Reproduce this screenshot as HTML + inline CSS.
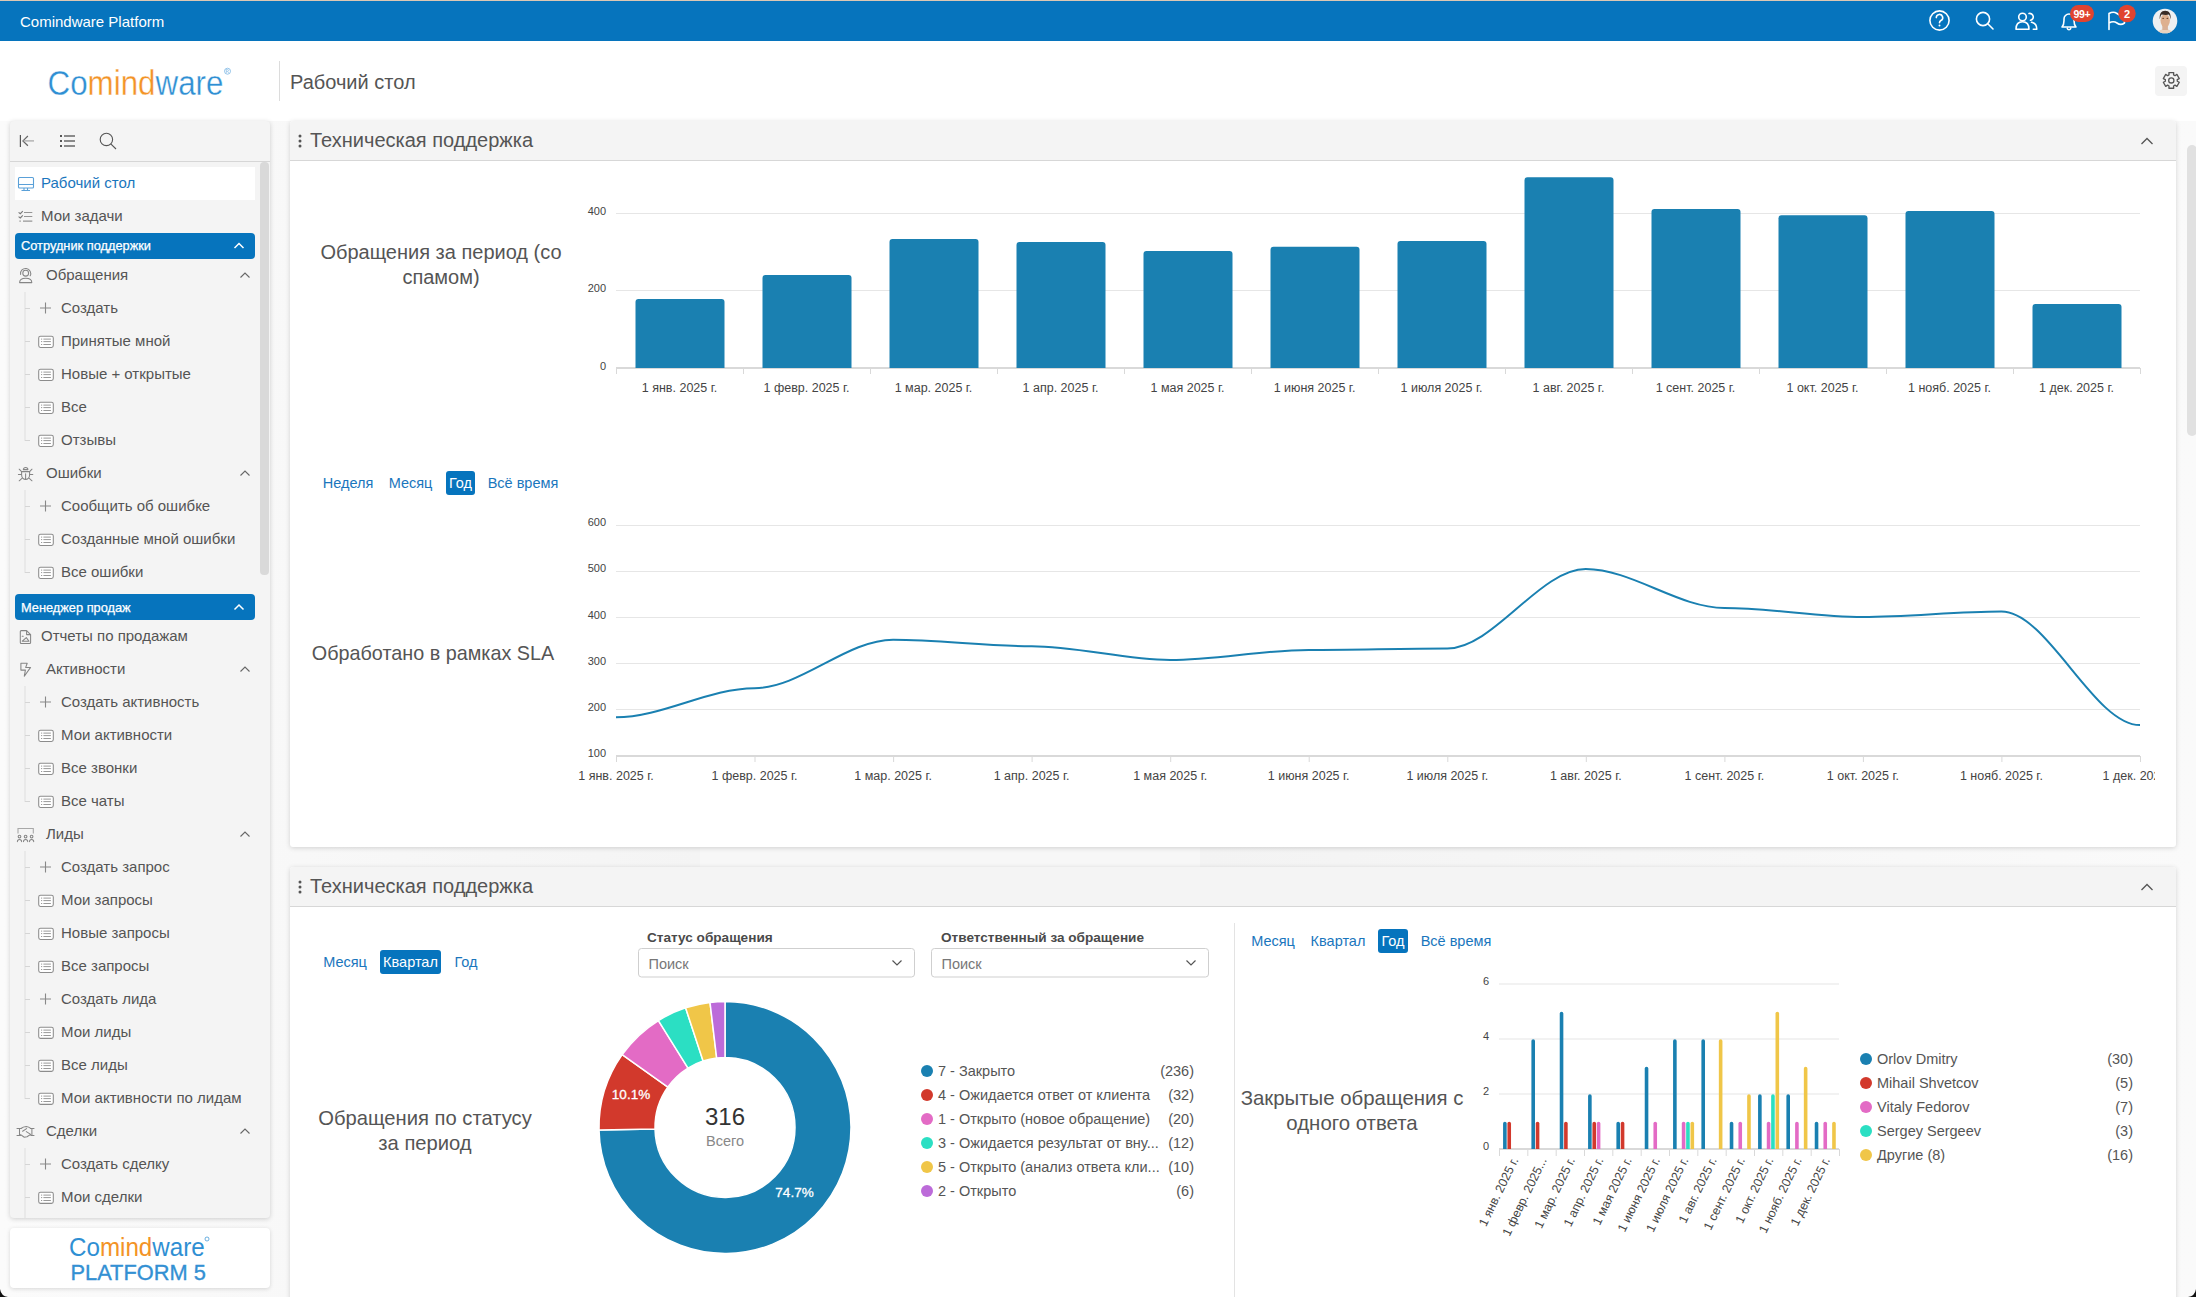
<!DOCTYPE html>
<html><head><meta charset="utf-8"><title>Comindware Platform</title>
<style>
html,body{margin:0;padding:0;}
body{width:2196px;height:1297px;overflow:hidden;position:relative;background:#f7f7f7;font-family:"Liberation Sans", sans-serif;}
.a{position:absolute;}
svg text{font-family:"Liberation Sans", sans-serif;}
</style></head><body>

<div class="a" style="left:0;top:0;width:2196px;height:121px;background:#fff"></div>
<div class="a" style="left:0;top:121px;width:700px;height:1176px;background:linear-gradient(90deg,#fbfbfb,#f4f4f4)"></div>
<div class="a" style="left:1200px;top:121px;width:996px;height:1176px;background:linear-gradient(90deg,#f3f3f3,#fafafa)"></div>
<div class="a" style="left:0;top:0;width:2196px;height:1px;background:#dcc7b4"></div>
<div class="a" style="left:0;top:1px;width:2196px;height:40px;background:#0674bd"></div>
<div class="a" style="left:10px;top:121px;width:260px;height:1097px;background:#f4f4f4;border-radius:4px;box-shadow:0 1px 5px rgba(0,0,0,0.18)"></div>
<div class="a" style="left:10px;top:161px;width:260px;height:1px;background:#d6d6d6"></div>
<div class="a" style="left:15px;top:167px;width:240px;height:33px;background:#fff"></div>
<div class="a" style="left:260px;top:162px;width:9px;height:413px;background:#d9d9d9;border-radius:4px"></div>
<div class="a" style="left:15px;top:233px;width:240px;height:26px;background:#0674bd;border-radius:4px"></div>
<div class="a" style="left:15px;top:594px;width:240px;height:26px;background:#0674bd;border-radius:4px"></div>
<div class="a" style="left:10px;top:1228px;width:260px;height:60px;background:#fff;border-radius:4px;box-shadow:0 1px 4px rgba(0,0,0,0.15)"></div>
<div class="a" style="left:290px;top:121px;width:1886px;height:726px;background:#fff;border-radius:3px;box-shadow:0 1px 5px rgba(0,0,0,0.16)"></div>
<div class="a" style="left:290px;top:121px;width:1886px;height:39px;background:#f4f4f4;border-bottom:1px solid #d7d7d7;border-radius:3px 3px 0 0"></div>
<div class="a" style="left:290px;top:867px;width:1886px;height:500px;background:#fff;border-radius:3px;box-shadow:0 1px 5px rgba(0,0,0,0.16)"></div>
<div class="a" style="left:290px;top:867px;width:1886px;height:39px;background:#f4f4f4;border-bottom:1px solid #d7d7d7;border-radius:3px 3px 0 0"></div>
<div class="a" style="left:2187px;top:145px;width:10px;height:291px;background:#e1e1e1;border-radius:5px"></div>
<div class="a" style="left:2155px;top:66px;width:32px;height:30px;background:#f4f4f4;border-radius:4px"></div>
<svg class="a" style="left:0;top:0" width="2196" height="1297">
<text x="20" y="27" font-size="15" fill="#fff" text-anchor="start" font-weight="normal" >Comindware Platform</text>
<circle cx="1939.5" cy="20.5" r="9.6" stroke="#fff" fill="none" stroke-width="1.6" stroke-linecap="round" stroke-linejoin="round"/>
<path d="M1936.3 17.6 a3.2 3.2 0 1 1 4.6 2.9 c-0.9 0.5 -1.4 1 -1.4 2.2" stroke="#fff" fill="none" stroke-width="1.6" stroke-linecap="round" stroke-linejoin="round"/><circle cx="1939.5" cy="25.6" r="1" fill="#fff"/>
<circle cx="1983" cy="19" r="6.6" stroke="#fff" fill="none" stroke-width="1.6" stroke-linecap="round" stroke-linejoin="round"/><path d="M1987.8 23.8 L1993 29" stroke="#fff" fill="none" stroke-width="1.6" stroke-linecap="round" stroke-linejoin="round"/>
<circle cx="2022.5" cy="17" r="3.8" stroke="#fff" fill="none" stroke-width="1.6" stroke-linecap="round" stroke-linejoin="round"/><path d="M2016 29.3 c0 -5 2.6 -7.5 6.5 -7.5 c3.9 0 6.5 2.5 6.5 7.5 z" stroke="#fff" fill="none" stroke-width="1.6" stroke-linecap="round" stroke-linejoin="round"/>
<path d="M2029 13.5 a3.3 3.3 0 1 1 1.5 6.8 M2031.5 22.3 c3 0.6 5.3 2.8 5.3 7 h-3.5" stroke="#fff" fill="none" stroke-width="1.6" stroke-linecap="round" stroke-linejoin="round"/>
<path d="M2062 27 h14 c-1.6 -1.8 -2 -3.5 -2 -6.5 v-1.5 a5 5 0 0 0 -10 0 v1.5 c0 3 -0.4 4.7 -2 6.5 z M2067.3 28.5 a1.8 1.8 0 0 0 3.4 0" stroke="#fff" fill="none" stroke-width="1.6" stroke-linecap="round" stroke-linejoin="round"/>
<path d="M2109 29.5 V13.5 c3 -1.8 5.5 -1.8 8 0 c2.5 1.8 5 1.8 7.5 0 v9.5 c-2.5 1.8 -5 1.8 -7.5 0 c-2.5 -1.8 -5 -1.8 -8 0" stroke="#fff" fill="none" stroke-width="1.6" stroke-linecap="round" stroke-linejoin="round"/>
<rect x="2070" y="5" width="24" height="17" rx="8.5" fill="#e0432f"/>
<text x="2082" y="17.5" font-size="10.5" fill="#fff" text-anchor="middle" font-weight="bold" letter-spacing="-0.3">99+</text>
<circle cx="2127" cy="13.5" r="8.7" fill="#e0432f"/>
<text x="2127" y="17.5" font-size="11" fill="#fff" text-anchor="middle" font-weight="bold" >2</text>
<clipPath id="av"><circle cx="2165" cy="21" r="12.3"/></clipPath>
<g clip-path="url(#av)"><rect x="2150" y="6" width="30" height="30" fill="#eef0f2"/><ellipse cx="2165" cy="35" rx="8.5" ry="6" fill="#ead2bd"/><rect x="2162.3" y="25" width="5.6" height="5" fill="#d8b197"/><ellipse cx="2165.2" cy="20.6" rx="4.7" ry="6.6" fill="#deb08f"/><path d="M2159.8 19.5 c-0.6 -5.5 1.3 -8.8 5.4 -8.8 c4.1 0 6 3.3 5.4 8.8 c-0.5 -2.5 -1 -4.5 -1.6 -5 c-1.5 0.6 -4.5 0.6 -7.4 0 c-0.8 0.6 -1.3 2.5 -1.8 5z" fill="#3a2c26"/><ellipse cx="2163.2" cy="18.3" rx="1" ry="0.6" fill="#6b4630"/><ellipse cx="2167.4" cy="18.3" rx="1" ry="0.6" fill="#6b4630"/></g>
<text x="0" y="0" transform="translate(47.5 94.5) scale(0.914 1)" font-size="34.3" stroke="#fff" stroke-width="0.35"><tspan fill="#2f8fd3">Co</tspan><tspan fill="#f39326">mind</tspan><tspan fill="#2f8fd3">ware</tspan></text>
<circle cx="227.5" cy="71.2" r="3" fill="none" stroke="#7bb6e3" stroke-width="0.8"/><path d="M226.3 73 V69.5 h1.3 a0.9 0.9 0 0 1 0 1.8 h-1.3 M227.6 71.3 l1.1 1.7" stroke="#7bb6e3" stroke-width="0.6" fill="none"/>
<rect x="279" y="61" width="1" height="40" fill="#dcdcdc"/>
<text x="290" y="89" font-size="20" fill="#555" text-anchor="start" font-weight="normal" >Рабочий стол</text>
<path d="M2168.90 72.56 L2173.70 72.56 L2173.55 74.84 L2174.99 75.67 L2176.89 74.40 L2179.29 78.56 L2177.24 79.56 L2177.24 81.24 L2179.29 82.24 L2176.89 86.40 L2174.99 85.13 L2173.55 85.96 L2173.70 88.24 L2168.90 88.24 L2169.05 85.96 L2167.61 85.13 L2165.71 86.40 L2163.31 82.24 L2165.36 81.24 L2165.36 79.56 L2163.31 78.56 L2165.71 74.40 L2167.61 75.67 L2169.05 74.84Z" stroke="#555" fill="none" stroke-width="1.3" stroke-linejoin="round"/><circle cx="2171.3" cy="80.4" r="2.6" stroke="#555" fill="none" stroke-width="1.3" stroke-linejoin="round"/>
<path d="M20.4 135 V147" stroke="#555" stroke-width="1.2" fill="none"/><path d="M27.9 136 L22.9 140.9 L27.9 145.8" stroke="#666" stroke-width="1.2" fill="none"/><path d="M23.5 140.9 H34" stroke="#aaa" stroke-width="1.3" fill="none"/>
<g fill="#555"><rect x="60" y="135" width="2" height="2"/><rect x="60" y="140" width="2" height="2"/><rect x="60" y="145" width="2" height="2"/></g>
<path d="M64 136 H75 M64 141 H75 M64 146 H75" stroke="#8a8a8a" stroke-width="1.8" fill="none"/>
<circle cx="106.4" cy="139.4" r="6.2" stroke="#555" stroke-width="1.1" fill="none"/><path d="M110.8 143.8 L116 149" stroke="#555" stroke-width="1.1" fill="none"/>
<rect x="18.5" y="177.5" width="15" height="10.5" rx="1" stroke="#5aa0d8" fill="none" stroke-width="1.1"/><path d="M18.5 184.5 H33.5 M24 188 V190 M27.5 188 V190 M21.5 190.5 H30" stroke="#5aa0d8" fill="none" stroke-width="1.1"/>
<text x="41" y="187.9" font-size="15" fill="#1a76bd" text-anchor="start" font-weight="normal" >Рабочий стол</text>
<path d="M18.6 212.4 l1.7 1.3 l2.5 -2.5 M18.6 216.6 l1.7 1.3 l2.5 -2.5" stroke="#777" fill="none" stroke-width="1.1"/><path d="M24 212.5 H32.3 M24 216.5 H32.3 M19.4 221.2 H20.8 M23 221.2 H32.3" stroke="#959595" fill="none" stroke-width="1.2"/>
<text x="41" y="220.9" font-size="15" fill="#555" text-anchor="start" font-weight="normal" >Мои задачи</text>
<text x="21" y="250.0" font-size="12.8" fill="#fff" text-anchor="start" font-weight="normal" stroke="#fff" stroke-width="0.25">Сотрудник поддержки</text>
<path d="M234.5 248.0 L239 243.5 L243.5 248.0" stroke="#fff" fill="none" stroke-width="1.5"/>
<text x="21" y="611.5" font-size="12.8" fill="#fff" text-anchor="start" font-weight="normal" stroke="#fff" stroke-width="0.25">Менеджер продаж</text>
<path d="M234.5 609.5 L239 605 L243.5 609.5" stroke="#fff" fill="none" stroke-width="1.5"/>
<circle cx="25.7" cy="273.2" r="2.9" stroke="#858585" fill="none" stroke-width="1.05" stroke-linecap="round" stroke-linejoin="round"/><path d="M20.6 274.4 a5.1 5.1 0 1 1 9.6 1.4" stroke="#858585" fill="none" stroke-width="1.05" stroke-linecap="round" stroke-linejoin="round"/><path d="M19.6 282.6 c0 -3.3 2.6 -4.3 6.1 -4.3 c3.5 0 6.1 1 6.1 4.3 z" stroke="#858585" fill="none" stroke-width="1.05" stroke-linecap="round" stroke-linejoin="round"/>
<text x="46" y="279.9" font-size="15" fill="#555" text-anchor="start" font-weight="normal" >Обращения</text>
<path d="M240.5 277.5 L245 273 L249.5 277.5" stroke="#666" fill="none" stroke-width="1.1"/>
<rect x="24.5" y="292" width="1" height="149" fill="#dedede"/>
<path d="M45.5 302.5 V313.5 M40 308 H51" stroke="#888" stroke-width="1.1" fill="none"/>
<rect x="25" y="308" width="5" height="1" fill="#d5d5d5"/>
<text x="61" y="312.9" font-size="15" fill="#555" text-anchor="start" font-weight="normal" >Создать</text>
<rect x="38.7" y="336.2" width="14.6" height="11.2" rx="1.8" stroke="#8c8c8c" stroke-width="1.05" fill="#fff"/><path d="M41 339.1 H42.2 M41 341.6 H42.2 M41 344.5 H42.2 M43.4 339.1 H50.9 M43.4 341.6 H50.9 M43.4 344.5 H50.9" stroke="#999" stroke-width="1" fill="none"/>
<rect x="25" y="341" width="5" height="1" fill="#d5d5d5"/>
<text x="61" y="345.9" font-size="15" fill="#555" text-anchor="start" font-weight="normal" >Принятые мной</text>
<rect x="38.7" y="369.2" width="14.6" height="11.2" rx="1.8" stroke="#8c8c8c" stroke-width="1.05" fill="#fff"/><path d="M41 372.1 H42.2 M41 374.6 H42.2 M41 377.5 H42.2 M43.4 372.1 H50.9 M43.4 374.6 H50.9 M43.4 377.5 H50.9" stroke="#999" stroke-width="1" fill="none"/>
<rect x="25" y="374" width="5" height="1" fill="#d5d5d5"/>
<text x="61" y="378.9" font-size="15" fill="#555" text-anchor="start" font-weight="normal" >Новые + открытые</text>
<rect x="38.7" y="402.2" width="14.6" height="11.2" rx="1.8" stroke="#8c8c8c" stroke-width="1.05" fill="#fff"/><path d="M41 405.1 H42.2 M41 407.6 H42.2 M41 410.5 H42.2 M43.4 405.1 H50.9 M43.4 407.6 H50.9 M43.4 410.5 H50.9" stroke="#999" stroke-width="1" fill="none"/>
<rect x="25" y="407" width="5" height="1" fill="#d5d5d5"/>
<text x="61" y="411.9" font-size="15" fill="#555" text-anchor="start" font-weight="normal" >Все</text>
<rect x="38.7" y="435.2" width="14.6" height="11.2" rx="1.8" stroke="#8c8c8c" stroke-width="1.05" fill="#fff"/><path d="M41 438.1 H42.2 M41 440.6 H42.2 M41 443.5 H42.2 M43.4 438.1 H50.9 M43.4 440.6 H50.9 M43.4 443.5 H50.9" stroke="#999" stroke-width="1" fill="none"/>
<rect x="25" y="440" width="5" height="1" fill="#d5d5d5"/>
<text x="61" y="444.9" font-size="15" fill="#555" text-anchor="start" font-weight="normal" >Отзывы</text>
<path d="M23.3 469.6 a2.3 2.2 0 0 1 4.6 0 z M21.6 471.6 H29.6 V474.8 a4 4.6 0 0 1 -8 0 z M25.6 473.8 V479.4" stroke="#858585" fill="none" stroke-width="1.05" stroke-linecap="round" stroke-linejoin="round"/><path d="M19.2 469.2 L21.6 471.6 M32 469.2 L29.6 471.6 M18.4 474.5 H21.5 M29.7 474.5 H32.8 M19.2 480.8 L22.2 478.2 M32 480.8 L29 478.2" stroke="#858585" fill="none" stroke-width="1.05" stroke-linecap="round" stroke-linejoin="round"/>
<text x="46" y="477.9" font-size="15" fill="#555" text-anchor="start" font-weight="normal" >Ошибки</text>
<path d="M240.5 475.5 L245 471 L249.5 475.5" stroke="#666" fill="none" stroke-width="1.1"/>
<rect x="24.5" y="490" width="1" height="83" fill="#dedede"/>
<path d="M45.5 500.5 V511.5 M40 506 H51" stroke="#888" stroke-width="1.1" fill="none"/>
<rect x="25" y="506" width="5" height="1" fill="#d5d5d5"/>
<text x="61" y="510.9" font-size="15" fill="#555" text-anchor="start" font-weight="normal" >Сообщить об ошибке</text>
<rect x="38.7" y="534.2" width="14.6" height="11.2" rx="1.8" stroke="#8c8c8c" stroke-width="1.05" fill="#fff"/><path d="M41 537.1 H42.2 M41 539.6 H42.2 M41 542.5 H42.2 M43.4 537.1 H50.9 M43.4 539.6 H50.9 M43.4 542.5 H50.9" stroke="#999" stroke-width="1" fill="none"/>
<rect x="25" y="539" width="5" height="1" fill="#d5d5d5"/>
<text x="61" y="543.9" font-size="15" fill="#555" text-anchor="start" font-weight="normal" >Созданные мной ошибки</text>
<rect x="38.7" y="567.2" width="14.6" height="11.2" rx="1.8" stroke="#8c8c8c" stroke-width="1.05" fill="#fff"/><path d="M41 570.1 H42.2 M41 572.6 H42.2 M41 575.5 H42.2 M43.4 570.1 H50.9 M43.4 572.6 H50.9 M43.4 575.5 H50.9" stroke="#999" stroke-width="1" fill="none"/>
<rect x="25" y="572" width="5" height="1" fill="#d5d5d5"/>
<text x="61" y="576.9" font-size="15" fill="#555" text-anchor="start" font-weight="normal" >Все ошибки</text>
<path d="M21.3 630.6 H26.6 L30.6 634.6 V642.4 a1 1 0 0 1 -1 1 H21.3 a1 1 0 0 1 -1 -1 V631.6 a1 1 0 0 1 1 -1 z M26.6 630.6 V634.6 H30.6 M22.2 636.3 H23.2 M22.3 641.2 L26.3 637.6 L29 641.2 Z" stroke="#858585" fill="none" stroke-width="1.05" stroke-linecap="round" stroke-linejoin="round"/>
<text x="41" y="640.9" font-size="15" fill="#555" text-anchor="start" font-weight="normal" >Отчеты по продажам</text>
<path d="M20.9 663.3 H27.2 L25.7 667.4 H30.6 L24.3 676.2 L25.4 670.1 H20.9 Z" stroke="#858585" fill="none" stroke-width="1.05" stroke-linecap="round" stroke-linejoin="round"/>
<text x="46" y="673.9" font-size="15" fill="#555" text-anchor="start" font-weight="normal" >Активности</text>
<path d="M240.5 671.5 L245 667 L249.5 671.5" stroke="#666" fill="none" stroke-width="1.1"/>
<rect x="24.5" y="686" width="1" height="116" fill="#dedede"/>
<path d="M45.5 696.5 V707.5 M40 702 H51" stroke="#888" stroke-width="1.1" fill="none"/>
<rect x="25" y="702" width="5" height="1" fill="#d5d5d5"/>
<text x="61" y="706.9" font-size="15" fill="#555" text-anchor="start" font-weight="normal" >Создать активность</text>
<rect x="38.7" y="730.2" width="14.6" height="11.2" rx="1.8" stroke="#8c8c8c" stroke-width="1.05" fill="#fff"/><path d="M41 733.1 H42.2 M41 735.6 H42.2 M41 738.5 H42.2 M43.4 733.1 H50.9 M43.4 735.6 H50.9 M43.4 738.5 H50.9" stroke="#999" stroke-width="1" fill="none"/>
<rect x="25" y="735" width="5" height="1" fill="#d5d5d5"/>
<text x="61" y="739.9" font-size="15" fill="#555" text-anchor="start" font-weight="normal" >Мои активности</text>
<rect x="38.7" y="763.2" width="14.6" height="11.2" rx="1.8" stroke="#8c8c8c" stroke-width="1.05" fill="#fff"/><path d="M41 766.1 H42.2 M41 768.6 H42.2 M41 771.5 H42.2 M43.4 766.1 H50.9 M43.4 768.6 H50.9 M43.4 771.5 H50.9" stroke="#999" stroke-width="1" fill="none"/>
<rect x="25" y="768" width="5" height="1" fill="#d5d5d5"/>
<text x="61" y="772.9" font-size="15" fill="#555" text-anchor="start" font-weight="normal" >Все звонки</text>
<rect x="38.7" y="796.2" width="14.6" height="11.2" rx="1.8" stroke="#8c8c8c" stroke-width="1.05" fill="#fff"/><path d="M41 799.1 H42.2 M41 801.6 H42.2 M41 804.5 H42.2 M43.4 799.1 H50.9 M43.4 801.6 H50.9 M43.4 804.5 H50.9" stroke="#999" stroke-width="1" fill="none"/>
<rect x="25" y="801" width="5" height="1" fill="#d5d5d5"/>
<text x="61" y="805.9" font-size="15" fill="#555" text-anchor="start" font-weight="normal" >Все чаты</text>
<path d="M18 833.4 V828.5 H33.3 V833.4" stroke="#a8a8a8" fill="none" stroke-width="1.1"/><circle cx="19.5" cy="836.6" r="1.35" stroke="#858585" fill="none" stroke-width="1.05" stroke-linecap="round" stroke-linejoin="round"/><circle cx="25.6" cy="836.6" r="1.35" stroke="#858585" fill="none" stroke-width="1.05" stroke-linecap="round" stroke-linejoin="round"/><circle cx="31.6" cy="836.6" r="1.35" stroke="#858585" fill="none" stroke-width="1.05" stroke-linecap="round" stroke-linejoin="round"/><path d="M17.4 841.6 a2.1 2.1 0 0 1 4.2 0 M23.5 841.6 a2.1 2.1 0 0 1 4.2 0 M29.5 841.6 a2.1 2.1 0 0 1 4.2 0" stroke="#858585" fill="none" stroke-width="1.05" stroke-linecap="round" stroke-linejoin="round"/>
<text x="46" y="838.9" font-size="15" fill="#555" text-anchor="start" font-weight="normal" >Лиды</text>
<path d="M240.5 836.5 L245 832 L249.5 836.5" stroke="#666" fill="none" stroke-width="1.1"/>
<rect x="24.5" y="851" width="1" height="248" fill="#dedede"/>
<path d="M45.5 861.5 V872.5 M40 867 H51" stroke="#888" stroke-width="1.1" fill="none"/>
<rect x="25" y="867" width="5" height="1" fill="#d5d5d5"/>
<text x="61" y="871.9" font-size="15" fill="#555" text-anchor="start" font-weight="normal" >Создать запрос</text>
<rect x="38.7" y="895.2" width="14.6" height="11.2" rx="1.8" stroke="#8c8c8c" stroke-width="1.05" fill="#fff"/><path d="M41 898.1 H42.2 M41 900.6 H42.2 M41 903.5 H42.2 M43.4 898.1 H50.9 M43.4 900.6 H50.9 M43.4 903.5 H50.9" stroke="#999" stroke-width="1" fill="none"/>
<rect x="25" y="900" width="5" height="1" fill="#d5d5d5"/>
<text x="61" y="904.9" font-size="15" fill="#555" text-anchor="start" font-weight="normal" >Мои запросы</text>
<rect x="38.7" y="928.2" width="14.6" height="11.2" rx="1.8" stroke="#8c8c8c" stroke-width="1.05" fill="#fff"/><path d="M41 931.1 H42.2 M41 933.6 H42.2 M41 936.5 H42.2 M43.4 931.1 H50.9 M43.4 933.6 H50.9 M43.4 936.5 H50.9" stroke="#999" stroke-width="1" fill="none"/>
<rect x="25" y="933" width="5" height="1" fill="#d5d5d5"/>
<text x="61" y="937.9" font-size="15" fill="#555" text-anchor="start" font-weight="normal" >Новые запросы</text>
<rect x="38.7" y="961.2" width="14.6" height="11.2" rx="1.8" stroke="#8c8c8c" stroke-width="1.05" fill="#fff"/><path d="M41 964.1 H42.2 M41 966.6 H42.2 M41 969.5 H42.2 M43.4 964.1 H50.9 M43.4 966.6 H50.9 M43.4 969.5 H50.9" stroke="#999" stroke-width="1" fill="none"/>
<rect x="25" y="966" width="5" height="1" fill="#d5d5d5"/>
<text x="61" y="970.9" font-size="15" fill="#555" text-anchor="start" font-weight="normal" >Все запросы</text>
<path d="M45.5 993.5 V1004.5 M40 999 H51" stroke="#888" stroke-width="1.1" fill="none"/>
<rect x="25" y="999" width="5" height="1" fill="#d5d5d5"/>
<text x="61" y="1003.9" font-size="15" fill="#555" text-anchor="start" font-weight="normal" >Создать лида</text>
<rect x="38.7" y="1027.2" width="14.6" height="11.2" rx="1.8" stroke="#8c8c8c" stroke-width="1.05" fill="#fff"/><path d="M41 1030.1 H42.2 M41 1032.6 H42.2 M41 1035.5 H42.2 M43.4 1030.1 H50.9 M43.4 1032.6 H50.9 M43.4 1035.5 H50.9" stroke="#999" stroke-width="1" fill="none"/>
<rect x="25" y="1032" width="5" height="1" fill="#d5d5d5"/>
<text x="61" y="1036.9" font-size="15" fill="#555" text-anchor="start" font-weight="normal" >Мои лиды</text>
<rect x="38.7" y="1060.2" width="14.6" height="11.2" rx="1.8" stroke="#8c8c8c" stroke-width="1.05" fill="#fff"/><path d="M41 1063.1 H42.2 M41 1065.6 H42.2 M41 1068.5 H42.2 M43.4 1063.1 H50.9 M43.4 1065.6 H50.9 M43.4 1068.5 H50.9" stroke="#999" stroke-width="1" fill="none"/>
<rect x="25" y="1065" width="5" height="1" fill="#d5d5d5"/>
<text x="61" y="1069.9" font-size="15" fill="#555" text-anchor="start" font-weight="normal" >Все лиды</text>
<rect x="38.7" y="1093.2" width="14.6" height="11.2" rx="1.8" stroke="#8c8c8c" stroke-width="1.05" fill="#fff"/><path d="M41 1096.1 H42.2 M41 1098.6 H42.2 M41 1101.5 H42.2 M43.4 1096.1 H50.9 M43.4 1098.6 H50.9 M43.4 1101.5 H50.9" stroke="#999" stroke-width="1" fill="none"/>
<rect x="25" y="1098" width="5" height="1" fill="#d5d5d5"/>
<text x="61" y="1102.9" font-size="15" fill="#555" text-anchor="start" font-weight="normal" >Мои активности по лидам</text>
<path d="M17 1128.5 H21 M30.5 1128.5 H34 M17 1135.4 H20.5 M30.8 1135.4 H34 M19.5 1128.5 V1135.4 M31.9 1128.5 V1135.4" stroke="#858585" fill="none" stroke-width="1.05" stroke-linecap="round" stroke-linejoin="round"/><path d="M21 1128.5 Q23 1126.6 26.3 1126.4 Q28.8 1126.6 30.6 1128.4 M20.6 1134.6 L24.3 1137.2 L27 1136.8 L30.7 1134.4 L26.3 1131.6 M22.6 1131.2 L26.6 1128.6" stroke="#858585" fill="none" stroke-width="1.05" stroke-linecap="round" stroke-linejoin="round"/>
<text x="46" y="1135.9" font-size="15" fill="#555" text-anchor="start" font-weight="normal" >Сделки</text>
<path d="M240.5 1133.5 L245 1129 L249.5 1133.5" stroke="#666" fill="none" stroke-width="1.1"/>
<rect x="24.5" y="1148" width="1" height="70" fill="#dedede"/>
<path d="M45.5 1158.5 V1169.5 M40 1164 H51" stroke="#888" stroke-width="1.1" fill="none"/>
<rect x="25" y="1164" width="5" height="1" fill="#d5d5d5"/>
<text x="61" y="1168.9" font-size="15" fill="#555" text-anchor="start" font-weight="normal" >Создать сделку</text>
<rect x="38.7" y="1192.2" width="14.6" height="11.2" rx="1.8" stroke="#8c8c8c" stroke-width="1.05" fill="#fff"/><path d="M41 1195.1 H42.2 M41 1197.6 H42.2 M41 1200.5 H42.2 M43.4 1195.1 H50.9 M43.4 1197.6 H50.9 M43.4 1200.5 H50.9" stroke="#999" stroke-width="1" fill="none"/>
<rect x="25" y="1197" width="5" height="1" fill="#d5d5d5"/>
<text x="61" y="1201.9" font-size="15" fill="#555" text-anchor="start" font-weight="normal" >Мои сделки</text>
<text x="0" y="0" transform="translate(69 1255.5) scale(0.93 1)" font-size="26"><tspan fill="#2f8fd3">Co</tspan><tspan fill="#f39326">mind</tspan><tspan fill="#2f8fd3">ware</tspan></text>
<circle cx="207" cy="1239" r="2" fill="none" stroke="#2f8fd3" stroke-width="0.7"/>
<text x="0" y="0" transform="translate(70.5 1279.6) scale(0.97 1)" font-size="22.5" fill="#3390d3" stroke="#3390d3" stroke-width="0.35" letter-spacing="0">PLATFORM 5</text>
<g fill="#555"><circle cx="300" cy="136" r="1.5"/><circle cx="300" cy="141" r="1.5"/><circle cx="300" cy="146" r="1.5"/></g>
<text x="310" y="147" font-size="20" fill="#555" text-anchor="start" font-weight="normal" >Техническая поддержка</text>
<path d="M2141.5 144 L2147 138.5 L2152.5 144" stroke="#555" fill="none" stroke-width="1.3"/>
<g fill="#555"><circle cx="300" cy="882" r="1.5"/><circle cx="300" cy="887" r="1.5"/><circle cx="300" cy="892" r="1.5"/></g>
<text x="310" y="893" font-size="20" fill="#555" text-anchor="start" font-weight="normal" >Техническая поддержка</text>
<path d="M2141.5 890 L2147 884.5 L2152.5 890" stroke="#555" fill="none" stroke-width="1.3"/>
<text x="441" y="259" font-size="20" fill="#555" text-anchor="middle" font-weight="normal" >Обращения за период (со</text>
<text x="441" y="284" font-size="20" fill="#555" text-anchor="middle" font-weight="normal" >спамом)</text>
<text x="606" y="369.5" font-size="11" fill="#444" text-anchor="end" font-weight="normal" >0</text>
<rect x="616" y="290" width="1524" height="1" fill="#e6e6e6"/>
<text x="606" y="292.0" font-size="11" fill="#444" text-anchor="end" font-weight="normal" >200</text>
<rect x="616" y="213" width="1524" height="1" fill="#e6e6e6"/>
<text x="606" y="214.5" font-size="11" fill="#444" text-anchor="end" font-weight="normal" >400</text>
<rect x="616" y="367" width="1524" height="2" fill="#d9d9d9"/>
<rect x="616" y="368" width="1" height="6" fill="#d9d9d9"/>
<path d="M635.5 368 V302.0 a3 3 0 0 1 3 -3 H721.5 a3 3 0 0 1 3 3 V368 z" fill="#1a80b1"/>
<text x="679.5" y="392" font-size="12.5" fill="#444" text-anchor="middle" font-weight="normal" >1 янв. 2025 г.</text>
<rect x="743" y="368" width="1" height="6" fill="#d9d9d9"/>
<path d="M762.5 368 V278.0 a3 3 0 0 1 3 -3 H848.5 a3 3 0 0 1 3 3 V368 z" fill="#1a80b1"/>
<text x="806.5" y="392" font-size="12.5" fill="#444" text-anchor="middle" font-weight="normal" >1 февр. 2025 г.</text>
<rect x="870" y="368" width="1" height="6" fill="#d9d9d9"/>
<path d="M889.5 368 V242.0 a3 3 0 0 1 3 -3 H975.5 a3 3 0 0 1 3 3 V368 z" fill="#1a80b1"/>
<text x="933.5" y="392" font-size="12.5" fill="#444" text-anchor="middle" font-weight="normal" >1 мар. 2025 г.</text>
<rect x="997" y="368" width="1" height="6" fill="#d9d9d9"/>
<path d="M1016.5 368 V245.1 a3 3 0 0 1 3 -3 H1102.5 a3 3 0 0 1 3 3 V368 z" fill="#1a80b1"/>
<text x="1060.5" y="392" font-size="12.5" fill="#444" text-anchor="middle" font-weight="normal" >1 апр. 2025 г.</text>
<rect x="1124" y="368" width="1" height="6" fill="#d9d9d9"/>
<path d="M1143.5 368 V254.0 a3 3 0 0 1 3 -3 H1229.5 a3 3 0 0 1 3 3 V368 z" fill="#1a80b1"/>
<text x="1187.5" y="392" font-size="12.5" fill="#444" text-anchor="middle" font-weight="normal" >1 мая 2025 г.</text>
<rect x="1251" y="368" width="1" height="6" fill="#d9d9d9"/>
<path d="M1270.5 368 V249.7 a3 3 0 0 1 3 -3 H1356.5 a3 3 0 0 1 3 3 V368 z" fill="#1a80b1"/>
<text x="1314.5" y="392" font-size="12.5" fill="#444" text-anchor="middle" font-weight="normal" >1 июня 2025 г.</text>
<rect x="1378" y="368" width="1" height="6" fill="#d9d9d9"/>
<path d="M1397.5 368 V243.9 a3 3 0 0 1 3 -3 H1483.5 a3 3 0 0 1 3 3 V368 z" fill="#1a80b1"/>
<text x="1441.5" y="392" font-size="12.5" fill="#444" text-anchor="middle" font-weight="normal" >1 июля 2025 г.</text>
<rect x="1505" y="368" width="1" height="6" fill="#d9d9d9"/>
<path d="M1524.5 368 V180.3 a3 3 0 0 1 3 -3 H1610.5 a3 3 0 0 1 3 3 V368 z" fill="#1a80b1"/>
<text x="1568.5" y="392" font-size="12.5" fill="#444" text-anchor="middle" font-weight="normal" >1 авг. 2025 г.</text>
<rect x="1632" y="368" width="1" height="6" fill="#d9d9d9"/>
<path d="M1651.5 368 V212.1 a3 3 0 0 1 3 -3 H1737.5 a3 3 0 0 1 3 3 V368 z" fill="#1a80b1"/>
<text x="1695.5" y="392" font-size="12.5" fill="#444" text-anchor="middle" font-weight="normal" >1 сент. 2025 г.</text>
<rect x="1759" y="368" width="1" height="6" fill="#d9d9d9"/>
<path d="M1778.5 368 V218.3 a3 3 0 0 1 3 -3 H1864.5 a3 3 0 0 1 3 3 V368 z" fill="#1a80b1"/>
<text x="1822.5" y="392" font-size="12.5" fill="#444" text-anchor="middle" font-weight="normal" >1 окт. 2025 г.</text>
<rect x="1886" y="368" width="1" height="6" fill="#d9d9d9"/>
<path d="M1905.5 368 V214.1 a3 3 0 0 1 3 -3 H1991.5 a3 3 0 0 1 3 3 V368 z" fill="#1a80b1"/>
<text x="1949.5" y="392" font-size="12.5" fill="#444" text-anchor="middle" font-weight="normal" >1 нояб. 2025 г.</text>
<rect x="2013" y="368" width="1" height="6" fill="#d9d9d9"/>
<path d="M2032.5 368 V307.1 a3 3 0 0 1 3 -3 H2118.5 a3 3 0 0 1 3 3 V368 z" fill="#1a80b1"/>
<text x="2076.5" y="392" font-size="12.5" fill="#444" text-anchor="middle" font-weight="normal" >1 дек. 2025 г.</text>
<rect x="2140" y="368" width="1" height="6" fill="#d9d9d9"/>
<text x="348.0" y="488" font-size="14.5" fill="#1a76bd" text-anchor="middle" font-weight="normal" >Неделя</text>
<text x="410.5" y="488" font-size="14.5" fill="#1a76bd" text-anchor="middle" font-weight="normal" >Месяц</text>
<rect x="446" y="471" width="29" height="24" rx="3" fill="#0674bd"/>
<text x="460.5" y="488" font-size="14.5" fill="#fff" text-anchor="middle" font-weight="normal" >Год</text>
<text x="523.0" y="488" font-size="14.5" fill="#1a76bd" text-anchor="middle" font-weight="normal" >Всё время</text>
<text x="433" y="660" font-size="19.8" fill="#555" text-anchor="middle" font-weight="normal" >Обработано в рамках SLA</text>
<text x="606" y="757.1" font-size="11" fill="#444" text-anchor="end" font-weight="normal" >100</text>
<rect x="616" y="709" width="1524" height="1" fill="#e6e6e6"/>
<text x="606" y="710.94" font-size="11" fill="#444" text-anchor="end" font-weight="normal" >200</text>
<rect x="616" y="663" width="1524" height="1" fill="#e6e6e6"/>
<text x="606" y="664.78" font-size="11" fill="#444" text-anchor="end" font-weight="normal" >300</text>
<rect x="616" y="617" width="1524" height="1" fill="#e6e6e6"/>
<text x="606" y="618.62" font-size="11" fill="#444" text-anchor="end" font-weight="normal" >400</text>
<rect x="616" y="571" width="1524" height="1" fill="#e6e6e6"/>
<text x="606" y="572.46" font-size="11" fill="#444" text-anchor="end" font-weight="normal" >500</text>
<rect x="616" y="525" width="1524" height="1" fill="#e6e6e6"/>
<text x="606" y="526.3000000000001" font-size="11" fill="#444" text-anchor="end" font-weight="normal" >600</text>
<rect x="616" y="755" width="1524" height="2" fill="#d9d9d9"/>
<clipPath id="clipL"><rect x="2000" y="760" width="155" height="30"/></clipPath>
<rect x="616.0" y="756" width="1" height="6" fill="#d9d9d9"/>
<text x="616.0" y="780" font-size="12.5" fill="#444" text-anchor="middle" font-weight="normal" >1 янв. 2025 г.</text>
<rect x="754.5" y="756" width="1" height="6" fill="#d9d9d9"/>
<text x="754.5" y="780" font-size="12.5" fill="#444" text-anchor="middle" font-weight="normal" >1 февр. 2025 г.</text>
<rect x="893.1" y="756" width="1" height="6" fill="#d9d9d9"/>
<text x="893.1" y="780" font-size="12.5" fill="#444" text-anchor="middle" font-weight="normal" >1 мар. 2025 г.</text>
<rect x="1031.6" y="756" width="1" height="6" fill="#d9d9d9"/>
<text x="1031.6" y="780" font-size="12.5" fill="#444" text-anchor="middle" font-weight="normal" >1 апр. 2025 г.</text>
<rect x="1170.2" y="756" width="1" height="6" fill="#d9d9d9"/>
<text x="1170.2" y="780" font-size="12.5" fill="#444" text-anchor="middle" font-weight="normal" >1 мая 2025 г.</text>
<rect x="1308.7" y="756" width="1" height="6" fill="#d9d9d9"/>
<text x="1308.7" y="780" font-size="12.5" fill="#444" text-anchor="middle" font-weight="normal" >1 июня 2025 г.</text>
<rect x="1447.3" y="756" width="1" height="6" fill="#d9d9d9"/>
<text x="1447.3" y="780" font-size="12.5" fill="#444" text-anchor="middle" font-weight="normal" >1 июля 2025 г.</text>
<rect x="1585.8" y="756" width="1" height="6" fill="#d9d9d9"/>
<text x="1585.8" y="780" font-size="12.5" fill="#444" text-anchor="middle" font-weight="normal" >1 авг. 2025 г.</text>
<rect x="1724.4" y="756" width="1" height="6" fill="#d9d9d9"/>
<text x="1724.4" y="780" font-size="12.5" fill="#444" text-anchor="middle" font-weight="normal" >1 сент. 2025 г.</text>
<rect x="1862.9" y="756" width="1" height="6" fill="#d9d9d9"/>
<text x="1862.9" y="780" font-size="12.5" fill="#444" text-anchor="middle" font-weight="normal" >1 окт. 2025 г.</text>
<rect x="2001.4" y="756" width="1" height="6" fill="#d9d9d9"/>
<text x="2001.4" y="780" font-size="12.5" fill="#444" text-anchor="middle" font-weight="normal" >1 нояб. 2025 г.</text>
<rect x="2140.0" y="756" width="1" height="6" fill="#d9d9d9"/>
<text x="2140.0" y="780" font-size="12.5" fill="#444" text-anchor="middle" font-weight="normal" clip-path="url(#clipL)">1 дек. 2025 г.</text>
<path d="M616.0 717.3 C662.2 717.3 708.4 688.2 754.5 688.2 C800.7 688.2 846.9 639.7 893.1 639.7 C939.3 639.7 985.5 646.2 1031.6 646.2 C1077.8 646.2 1124.0 660.0 1170.2 660.0 C1216.4 660.0 1262.5 649.9 1308.7 649.9 C1354.9 649.9 1401.1 648.5 1447.3 648.5 C1493.5 648.5 1539.6 569.1 1585.8 569.1 C1632.0 569.1 1678.2 607.9 1724.4 607.9 C1770.5 607.9 1816.7 617.1 1862.9 617.1 C1909.1 617.1 1955.3 611.6 2001.4 611.6 C2047.6 611.6 2093.8 725.1 2140.0 725.1" fill="none" stroke="#1a80b1" stroke-width="2"/>
<text x="345.0" y="967" font-size="14.5" fill="#1a76bd" text-anchor="middle" font-weight="normal" >Месяц</text>
<rect x="380" y="950" width="61" height="24" rx="3" fill="#0674bd"/>
<text x="410.5" y="967" font-size="14.5" fill="#fff" text-anchor="middle" font-weight="normal" >Квартал</text>
<text x="466.0" y="967" font-size="14.5" fill="#1a76bd" text-anchor="middle" font-weight="normal" >Год</text>
<text x="425" y="1125" font-size="20.2" fill="#555" text-anchor="middle" font-weight="normal" >Обращения по статусу</text>
<text x="425" y="1150" font-size="20.2" fill="#555" text-anchor="middle" font-weight="normal" >за период</text>
<text x="647" y="942" font-size="13.6" fill="#4a4a4a" text-anchor="start" font-weight="bold" >Статус обращения</text>
<rect x="638.5" y="948.5" width="276.0" height="28.5" rx="3" fill="#fff" stroke="#cfcfcf" stroke-width="1"/>
<text x="648.5" y="968.5" font-size="14.5" fill="#777" text-anchor="start" font-weight="normal" >Поиск</text>
<path d="M892.5 960.5 L897.0 965 L901.5 960.5" stroke="#555" fill="none" stroke-width="1.2"/>
<text x="941" y="942" font-size="13.6" fill="#4a4a4a" text-anchor="start" font-weight="bold" >Ответственный за обращение</text>
<rect x="931.5" y="948.5" width="277.0" height="28.5" rx="3" fill="#fff" stroke="#cfcfcf" stroke-width="1"/>
<text x="941.5" y="968.5" font-size="14.5" fill="#777" text-anchor="start" font-weight="normal" >Поиск</text>
<path d="M1186.5 960.5 L1191.0 965 L1195.5 960.5" stroke="#555" fill="none" stroke-width="1.2"/>
<rect x="1234" y="923" width="1" height="380" fill="#e3e3e3"/>
<path d="M725.00 1001.50 A126 126 0 1 1 599.02 1130.01 L655.01 1128.89 A70 70 0 1 0 725.00 1057.50 Z" fill="#1a80b1" stroke="#fff" stroke-width="1.5" stroke-linejoin="round"/>
<path d="M599.02 1130.01 A126 126 0 0 1 622.19 1054.66 L667.88 1087.03 A70 70 0 0 0 655.01 1128.89 Z" fill="#d2392c" stroke="#fff" stroke-width="1.5" stroke-linejoin="round"/>
<path d="M622.19 1054.66 A126 126 0 0 1 658.42 1020.53 L688.01 1068.07 A70 70 0 0 0 667.88 1087.03 Z" fill="#e36bc5" stroke="#fff" stroke-width="1.5" stroke-linejoin="round"/>
<path d="M658.42 1020.53 A126 126 0 0 1 685.59 1007.82 L703.10 1061.01 A70 70 0 0 0 688.01 1068.07 Z" fill="#2bdfc3" stroke="#fff" stroke-width="1.5" stroke-linejoin="round"/>
<path d="M685.59 1007.82 A126 126 0 0 1 710.00 1002.40 L716.67 1058.00 A70 70 0 0 0 703.10 1061.01 Z" fill="#f0c648" stroke="#fff" stroke-width="1.5" stroke-linejoin="round"/>
<path d="M710.00 1002.40 A126 126 0 0 1 725.00 1001.50 L725.00 1057.50 A70 70 0 0 0 716.67 1058.00 Z" fill="#bc6bd9" stroke="#fff" stroke-width="1.5" stroke-linejoin="round"/>
<text x="725" y="1125" font-size="24" fill="#333" text-anchor="middle" font-weight="normal" >316</text>
<text x="725" y="1146" font-size="14.5" fill="#888" text-anchor="middle" font-weight="normal" >Всего</text>
<text x="631" y="1099" font-size="13.5" fill="#fff" text-anchor="middle" font-weight="normal" stroke="#fff" stroke-width="0.3">10.1%</text>
<text x="794.5" y="1197" font-size="13.5" fill="#fff" text-anchor="middle" font-weight="normal" stroke="#fff" stroke-width="0.3">74.7%</text>
<circle cx="927" cy="1071" r="6" fill="#1a80b1"/>
<text x="938" y="1076" font-size="14.5" fill="#555" text-anchor="start" font-weight="normal" >7 - Закрыто</text>
<text x="1194" y="1076" font-size="14.5" fill="#555" text-anchor="end" font-weight="normal" >(236)</text>
<circle cx="927" cy="1095" r="6" fill="#d2392c"/>
<text x="938" y="1100" font-size="14.5" fill="#555" text-anchor="start" font-weight="normal" >4 - Ожидается ответ от клиента</text>
<text x="1194" y="1100" font-size="14.5" fill="#555" text-anchor="end" font-weight="normal" >(32)</text>
<circle cx="927" cy="1119" r="6" fill="#e36bc5"/>
<text x="938" y="1124" font-size="14.5" fill="#555" text-anchor="start" font-weight="normal" >1 - Открыто (новое обращение)</text>
<text x="1194" y="1124" font-size="14.5" fill="#555" text-anchor="end" font-weight="normal" >(20)</text>
<circle cx="927" cy="1143" r="6" fill="#2bdfc3"/>
<text x="938" y="1148" font-size="14.5" fill="#555" text-anchor="start" font-weight="normal" >3 - Ожидается результат от вну...</text>
<text x="1194" y="1148" font-size="14.5" fill="#555" text-anchor="end" font-weight="normal" >(12)</text>
<circle cx="927" cy="1167" r="6" fill="#f0c648"/>
<text x="938" y="1172" font-size="14.5" fill="#555" text-anchor="start" font-weight="normal" >5 - Открыто (анализ ответа кли...</text>
<text x="1194" y="1172" font-size="14.5" fill="#555" text-anchor="end" font-weight="normal" >(10)</text>
<circle cx="927" cy="1191" r="6" fill="#bc6bd9"/>
<text x="938" y="1196" font-size="14.5" fill="#555" text-anchor="start" font-weight="normal" >2 - Открыто</text>
<text x="1194" y="1196" font-size="14.5" fill="#555" text-anchor="end" font-weight="normal" >(6)</text>
<text x="1273.0" y="946" font-size="14.5" fill="#1a76bd" text-anchor="middle" font-weight="normal" >Месяц</text>
<text x="1338.0" y="946" font-size="14.5" fill="#1a76bd" text-anchor="middle" font-weight="normal" >Квартал</text>
<rect x="1378" y="929" width="30" height="24" rx="3" fill="#0674bd"/>
<text x="1393.0" y="946" font-size="14.5" fill="#fff" text-anchor="middle" font-weight="normal" >Год</text>
<text x="1456.0" y="946" font-size="14.5" fill="#1a76bd" text-anchor="middle" font-weight="normal" >Всё время</text>
<text x="1352" y="1105" font-size="20.4" fill="#555" text-anchor="middle" font-weight="normal" >Закрытые обращения с</text>
<text x="1352" y="1130" font-size="20.4" fill="#555" text-anchor="middle" font-weight="normal" >одного ответа</text>
<text x="1489" y="1149.8" font-size="11" fill="#444" text-anchor="end" font-weight="normal" >0</text>
<rect x="1499" y="1093.5" width="340" height="1" fill="#e6e6e6"/>
<text x="1489" y="1094.8" font-size="11" fill="#444" text-anchor="end" font-weight="normal" >2</text>
<rect x="1499" y="1038.5" width="340" height="1" fill="#e6e6e6"/>
<text x="1489" y="1039.8" font-size="11" fill="#444" text-anchor="end" font-weight="normal" >4</text>
<rect x="1499" y="983.5" width="340" height="1" fill="#e6e6e6"/>
<text x="1489" y="984.8" font-size="11" fill="#444" text-anchor="end" font-weight="normal" >6</text>
<rect x="1499" y="1148" width="340" height="2" fill="#d9d9d9"/>
<rect x="1499.00" y="1149" width="1" height="7" fill="#d9d9d9"/>
<path d="M1503.07 1149 V1123.50 a1.8 1.8 0 0 1 3.6 0 V1149 z" fill="#1a80b1"/>
<path d="M1507.43 1149 V1123.50 a1.8 1.8 0 0 1 3.6 0 V1149 z" fill="#d2392c"/>
<text x="1518.7" y="1160" font-size="12.4" fill="#444" text-anchor="end" transform="rotate(-64 1518.7 1160)">1 янв. 2025 г.</text>
<rect x="1527.33" y="1149" width="1" height="7" fill="#d9d9d9"/>
<path d="M1531.40 1149 V1041.00 a1.8 1.8 0 0 1 3.6 0 V1149 z" fill="#1a80b1"/>
<path d="M1535.76 1149 V1123.50 a1.8 1.8 0 0 1 3.6 0 V1149 z" fill="#d2392c"/>
<text x="1547.0" y="1160" font-size="12.4" fill="#444" text-anchor="end" transform="rotate(-64 1547.0 1160)">1 февр. 2025...</text>
<rect x="1555.67" y="1149" width="1" height="7" fill="#d9d9d9"/>
<path d="M1559.74 1149 V1013.50 a1.8 1.8 0 0 1 3.6 0 V1149 z" fill="#1a80b1"/>
<path d="M1564.09 1149 V1123.50 a1.8 1.8 0 0 1 3.6 0 V1149 z" fill="#d2392c"/>
<text x="1575.3" y="1160" font-size="12.4" fill="#444" text-anchor="end" transform="rotate(-64 1575.3 1160)">1 мар. 2025 г.</text>
<rect x="1584.00" y="1149" width="1" height="7" fill="#d9d9d9"/>
<path d="M1588.07 1149 V1096.00 a1.8 1.8 0 0 1 3.6 0 V1149 z" fill="#1a80b1"/>
<path d="M1592.43 1149 V1123.50 a1.8 1.8 0 0 1 3.6 0 V1149 z" fill="#d2392c"/>
<path d="M1596.79 1149 V1123.50 a1.8 1.8 0 0 1 3.6 0 V1149 z" fill="#e36bc5"/>
<text x="1603.7" y="1160" font-size="12.4" fill="#444" text-anchor="end" transform="rotate(-64 1603.7 1160)">1 апр. 2025 г.</text>
<rect x="1612.33" y="1149" width="1" height="7" fill="#d9d9d9"/>
<path d="M1616.40 1149 V1123.50 a1.8 1.8 0 0 1 3.6 0 V1149 z" fill="#1a80b1"/>
<path d="M1620.76 1149 V1123.50 a1.8 1.8 0 0 1 3.6 0 V1149 z" fill="#d2392c"/>
<text x="1632.0" y="1160" font-size="12.4" fill="#444" text-anchor="end" transform="rotate(-64 1632.0 1160)">1 мая 2025 г.</text>
<rect x="1640.67" y="1149" width="1" height="7" fill="#d9d9d9"/>
<path d="M1644.74 1149 V1068.50 a1.8 1.8 0 0 1 3.6 0 V1149 z" fill="#1a80b1"/>
<path d="M1653.45 1149 V1123.50 a1.8 1.8 0 0 1 3.6 0 V1149 z" fill="#e36bc5"/>
<text x="1660.3" y="1160" font-size="12.4" fill="#444" text-anchor="end" transform="rotate(-64 1660.3 1160)">1 июня 2025 г.</text>
<rect x="1669.00" y="1149" width="1" height="7" fill="#d9d9d9"/>
<path d="M1673.07 1149 V1041.00 a1.8 1.8 0 0 1 3.6 0 V1149 z" fill="#1a80b1"/>
<path d="M1681.79 1149 V1123.50 a1.8 1.8 0 0 1 3.6 0 V1149 z" fill="#e36bc5"/>
<path d="M1686.15 1149 V1123.50 a1.8 1.8 0 0 1 3.6 0 V1149 z" fill="#2bdfc3"/>
<path d="M1690.51 1149 V1123.50 a1.8 1.8 0 0 1 3.6 0 V1149 z" fill="#f0c648"/>
<text x="1688.7" y="1160" font-size="12.4" fill="#444" text-anchor="end" transform="rotate(-64 1688.7 1160)">1 июля 2025 г.</text>
<rect x="1697.33" y="1149" width="1" height="7" fill="#d9d9d9"/>
<path d="M1701.40 1149 V1041.00 a1.8 1.8 0 0 1 3.6 0 V1149 z" fill="#1a80b1"/>
<path d="M1718.84 1149 V1041.00 a1.8 1.8 0 0 1 3.6 0 V1149 z" fill="#f0c648"/>
<text x="1717.0" y="1160" font-size="12.4" fill="#444" text-anchor="end" transform="rotate(-64 1717.0 1160)">1 авг. 2025 г.</text>
<rect x="1725.67" y="1149" width="1" height="7" fill="#d9d9d9"/>
<path d="M1729.74 1149 V1123.50 a1.8 1.8 0 0 1 3.6 0 V1149 z" fill="#1a80b1"/>
<path d="M1738.45 1149 V1123.50 a1.8 1.8 0 0 1 3.6 0 V1149 z" fill="#e36bc5"/>
<path d="M1747.17 1149 V1096.00 a1.8 1.8 0 0 1 3.6 0 V1149 z" fill="#f0c648"/>
<text x="1745.3" y="1160" font-size="12.4" fill="#444" text-anchor="end" transform="rotate(-64 1745.3 1160)">1 сент. 2025 г.</text>
<rect x="1754.00" y="1149" width="1" height="7" fill="#d9d9d9"/>
<path d="M1758.07 1149 V1096.00 a1.8 1.8 0 0 1 3.6 0 V1149 z" fill="#1a80b1"/>
<path d="M1766.79 1149 V1123.50 a1.8 1.8 0 0 1 3.6 0 V1149 z" fill="#e36bc5"/>
<path d="M1771.15 1149 V1096.00 a1.8 1.8 0 0 1 3.6 0 V1149 z" fill="#2bdfc3"/>
<path d="M1775.51 1149 V1013.50 a1.8 1.8 0 0 1 3.6 0 V1149 z" fill="#f0c648"/>
<text x="1773.7" y="1160" font-size="12.4" fill="#444" text-anchor="end" transform="rotate(-64 1773.7 1160)">1 окт. 2025 г.</text>
<rect x="1782.33" y="1149" width="1" height="7" fill="#d9d9d9"/>
<path d="M1786.40 1149 V1096.00 a1.8 1.8 0 0 1 3.6 0 V1149 z" fill="#1a80b1"/>
<path d="M1795.12 1149 V1123.50 a1.8 1.8 0 0 1 3.6 0 V1149 z" fill="#e36bc5"/>
<path d="M1803.84 1149 V1068.50 a1.8 1.8 0 0 1 3.6 0 V1149 z" fill="#f0c648"/>
<text x="1802.0" y="1160" font-size="12.4" fill="#444" text-anchor="end" transform="rotate(-64 1802.0 1160)">1 нояб. 2025 г.</text>
<rect x="1810.67" y="1149" width="1" height="7" fill="#d9d9d9"/>
<path d="M1814.74 1149 V1123.50 a1.8 1.8 0 0 1 3.6 0 V1149 z" fill="#1a80b1"/>
<path d="M1823.45 1149 V1123.50 a1.8 1.8 0 0 1 3.6 0 V1149 z" fill="#e36bc5"/>
<path d="M1832.17 1149 V1123.50 a1.8 1.8 0 0 1 3.6 0 V1149 z" fill="#f0c648"/>
<text x="1830.3" y="1160" font-size="12.4" fill="#444" text-anchor="end" transform="rotate(-64 1830.3 1160)">1 дек. 2025 г.</text>
<rect x="1839" y="1149" width="1" height="7" fill="#d9d9d9"/>
<circle cx="1866" cy="1059" r="6" fill="#1a80b1"/>
<text x="1877" y="1064" font-size="14.5" fill="#555" text-anchor="start" font-weight="normal" >Orlov Dmitry</text>
<text x="2133" y="1064" font-size="14.5" fill="#555" text-anchor="end" font-weight="normal" >(30)</text>
<circle cx="1866" cy="1083" r="6" fill="#d2392c"/>
<text x="1877" y="1088" font-size="14.5" fill="#555" text-anchor="start" font-weight="normal" >Mihail Shvetcov</text>
<text x="2133" y="1088" font-size="14.5" fill="#555" text-anchor="end" font-weight="normal" >(5)</text>
<circle cx="1866" cy="1107" r="6" fill="#e36bc5"/>
<text x="1877" y="1112" font-size="14.5" fill="#555" text-anchor="start" font-weight="normal" >Vitaly Fedorov</text>
<text x="2133" y="1112" font-size="14.5" fill="#555" text-anchor="end" font-weight="normal" >(7)</text>
<circle cx="1866" cy="1131" r="6" fill="#2bdfc3"/>
<text x="1877" y="1136" font-size="14.5" fill="#555" text-anchor="start" font-weight="normal" >Sergey Sergeev</text>
<text x="2133" y="1136" font-size="14.5" fill="#555" text-anchor="end" font-weight="normal" >(3)</text>
<circle cx="1866" cy="1155" r="6" fill="#f0c648"/>
<text x="1877" y="1160" font-size="14.5" fill="#555" text-anchor="start" font-weight="normal" >Другие (8)</text>
<text x="2133" y="1160" font-size="14.5" fill="#555" text-anchor="end" font-weight="normal" >(16)</text>
</svg>
<svg class="a" style="left:0;top:0" width="2196" height="1297"><path d="M0 1289 Q1 1296 8 1297 H0 Z" fill="#111"/><path d="M2196 1289 Q2195 1296 2188 1297 H2196 Z" fill="#111"/></svg>
</body></html>
